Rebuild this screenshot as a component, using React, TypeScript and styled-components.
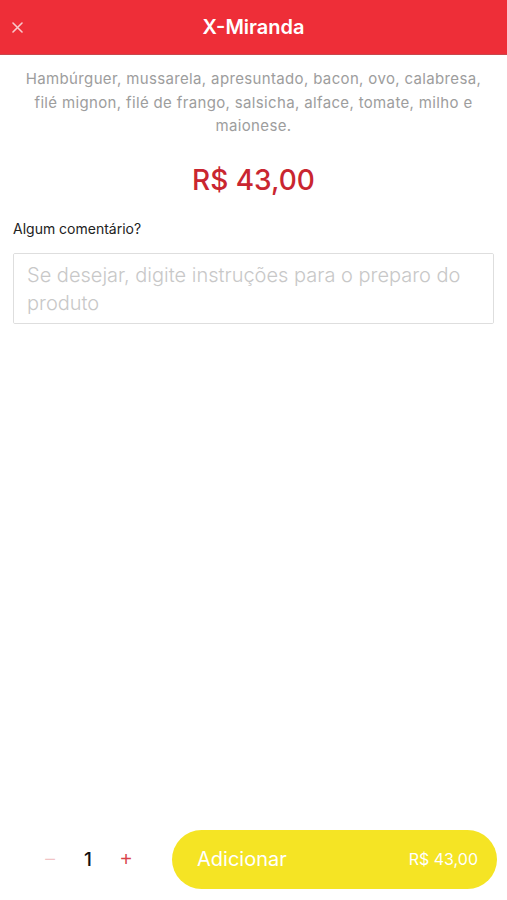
import { createGlobalStyle, styled } from "styled-components";

const GlobalStyle = createGlobalStyle`
  html, body {
    margin: 0;
    padding: 0;
    background: #fff;
    font-family: Inter, "Open Sans", sans-serif;
  }
  * { box-sizing: border-box; }
`;

const Screen = styled.div`
  width: 507px;
  height: 900px;
  display: flex;
  flex-direction: column;
  background: #fff;
`;

const Header = styled.header`
  height: 55px;
  background: #ee2e38;
  border-bottom: 1px solid #c9474c;
  display: grid;
  grid-template-columns: 50px 1fr 50px;
  align-items: center;
`;

const CloseButton = styled.button`
  border: none;
  background: none;
  padding: 0 0 0 12px;
  color: #f8c9cb;
  display: flex;
  align-items: center;
  cursor: pointer;
`;

const Title = styled.h1`
  margin: 0;
  text-align: center;
  color: #fff;
  font-size: 20px;
  font-weight: 600;
`;

const Content = styled.main`
  flex: 1;
  padding: 12px 13px 0;
  display: flex;
  flex-direction: column;
`;

const Description = styled.p`
  margin: 0;
  padding: 0 4px;
  text-align: center;
  color: #9d9d9d;
  font-size: 15px;
  letter-spacing: 0.35px;
  line-height: 23.5px;
  font-weight: 400;
`;

const Price = styled.div`
  margin-top: 25px;
  text-align: center;
  color: #c92630;
  font-size: 28px;
  font-weight: 500;
`;

const Label = styled.label`
  margin-top: 23px;
  font-size: 14px;
  color: #222;
`;

const Comment = styled.textarea`
  margin-top: 16px;
  width: 100%;
  height: 71px;
  border: 1px solid #dedede;
  border-radius: 2px;
  padding: 7px 13px;
  font-family: inherit;
  font-size: 20px;
  line-height: 28px;
  resize: none;
  color: #333;
  &::placeholder {
    color: #c8c8c8;
    font-weight: 300;
  }
`;

const Footer = styled.footer`
  height: 70px;
  margin-bottom: 6px;
  display: flex;
  align-items: center;
  padding: 0 10px 0 40px;
`;

const Stepper = styled.div`
  display: flex;
  align-items: center;
  width: 132px;
`;

const StepButton = styled.button<{ $active?: boolean }>`
  border: none;
  background: none;
  width: 20px;
  padding: 0;
  font-size: 20px;
  font-weight: 300;
  color: ${(p) => (p.$active ? "#d8424a" : "#f1c3c5")};
  cursor: pointer;
`;

const Quantity = styled.span`
  width: 56px;
  text-align: center;
  font-size: 19px;
  font-weight: 500;
  color: #111;
`;

const AddButton = styled.button`
  flex: 1;
  height: 59px;
  border: none;
  border-radius: 30px;
  background: #f5e424;
  color: #fff;
  display: flex;
  align-items: center;
  justify-content: space-between;
  padding: 0 19px 0 25px;
  font-family: inherit;
  cursor: pointer;
`;

const AddLabel = styled.span`
  font-size: 20px;
  font-weight: 400;
`;

const AddPrice = styled.span`
  font-size: 16px;
  font-weight: 400;
`;

export default function App() {
  return (
    <>
      <GlobalStyle />
      <Screen>
        <Header>
          <CloseButton aria-label="Fechar">
            <svg width="11" height="11" viewBox="0 0 11 11">
              <path
                d="M1 1 L10 10 M10 1 L1 10"
                stroke="currentColor"
                strokeWidth="1.6"
                strokeLinecap="round"
              />
            </svg>
          </CloseButton>
          <Title>X-Miranda</Title>
          <span />
        </Header>
        <Content>
          <Description>
            Hambúrguer, mussarela, apresuntado, bacon, ovo, calabresa, filé
            mignon, filé de frango, salsicha, alface, tomate, milho e maionese.
          </Description>
          <Price>R$ 43,00</Price>
          <Label>Algum comentário?</Label>
          <Comment placeholder="Se desejar, digite instruções para o preparo do produto" />
        </Content>
        <Footer>
          <Stepper>
            <StepButton>−</StepButton>
            <Quantity>1</Quantity>
            <StepButton $active>+</StepButton>
          </Stepper>
          <AddButton>
            <AddLabel>Adicionar</AddLabel>
            <AddPrice>R$ 43,00</AddPrice>
          </AddButton>
        </Footer>
      </Screen>
    </>
  );
}
